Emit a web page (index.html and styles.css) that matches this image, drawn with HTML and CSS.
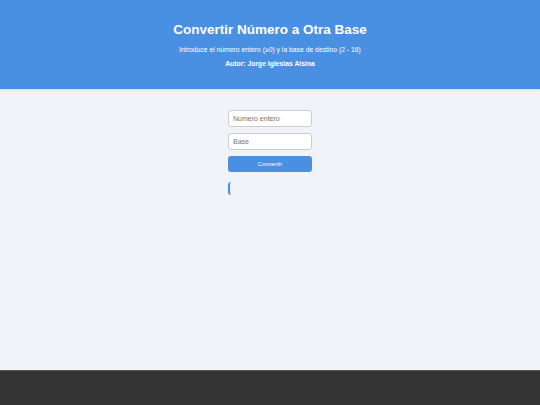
FILE: index.html
```html
<!DOCTYPE html>
<html lang="es">
<head>
<meta charset="utf-8">
<title>Convertir Número a Otra Base</title>
<link rel="stylesheet" href="styles.css">
</head>
<body>
<header class="header">
  <h1 class="title">Convertir Número a Otra Base</h1>
  <p class="subtitle">Introduce el número entero (≥0) y la base de destino (2 - 16)</p>
  <p class="author">Autor: Jorge Iglesias Alsina</p>
</header>
<main class="main">
  <form class="form">
    <input class="field" type="text" placeholder="Número entero">
    <input class="field" type="text" placeholder="Base">
    <button class="btn" type="button">Convertir</button>
  </form>
  <div class="result"></div>
</main>
<footer class="footer"></footer>
</body>
</html>
```
FILE: styles.css
```css
* { box-sizing: border-box; }
html, body { margin: 0; padding: 0; height: 100%; }
body {
  font-family: "Liberation Sans", Arial, sans-serif;
  background: #f0f4f8;
  display: flex;
  flex-direction: column;
  min-height: 405px;
}
.header {
  background: #4a90e2;
  color: #fff;
  text-align: center;
  height: 89px;
  padding-top: 22px;
  box-shadow: 0 1px 2px rgba(0,0,0,0.1);
}
.title {
  margin: 0;
  font-size: 13.5px;
  font-weight: bold;
  line-height: 16px;
}
.subtitle {
  margin: 7px 0 0;
  font-size: 6.8px;
  line-height: 9px;
}
.author {
  margin: 5px 0 0;
  font-size: 6.8px;
  line-height: 9px;
  font-weight: bold;
}
.main {
  flex: 1;
  display: flex;
  flex-direction: column;
  align-items: center;
  padding-top: 21px;
}
.form {
  width: 84px;
  display: flex;
  flex-direction: column;
  gap: 6px;
}
.field {
  height: 17px;
  width: 84px;
  border: 1px solid #ccc;
  border-radius: 3px;
  background: #fff;
  font-family: "Liberation Sans", Arial, sans-serif;
  font-size: 7px;
  padding: 0 4px;
  margin: 0;
  color: #333;
}
.field::placeholder { color: #757575; }
.btn {
  height: 16px;
  width: 84px;
  border: none;
  border-radius: 3px;
  background: #4a90e2;
  color: #fff;
  font-family: "Liberation Sans", Arial, sans-serif;
  font-size: 6px;
  margin: 0;
  padding: 0;
}
.result {
  width: 84px;
  height: 13px;
  margin-top: 10px;
  border-left: 2px solid #4a90e2;
  border-radius: 3px;
}
.footer {
  height: 35px;
  background: #333;
  border-top: 1px solid #555;
}
```
